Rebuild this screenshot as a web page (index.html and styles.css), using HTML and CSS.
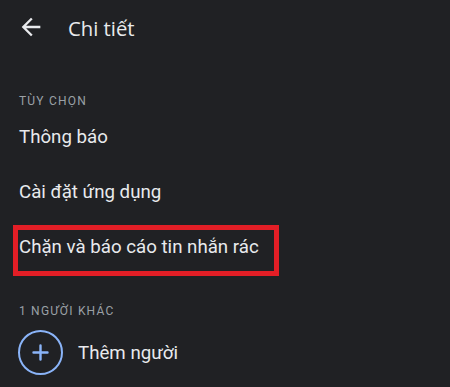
FILE: index.html
```html
<!DOCTYPE html>
<html lang="vi">
<head>
<meta charset="utf-8">
<link rel="stylesheet" href="styles.css">
</head>
<body>
<div class="screen">
  <header class="topbar">
    <svg class="back" viewBox="0 0 24 24" width="28" height="28"><path d="M20 11H7.83l5.59-5.59L12 4l-8 8 8 8 1.41-1.41L7.83 13H20v-2z" fill="#e8eaed"/></svg>
    <h1 class="title">Chi tiết</h1>
  </header>
  <div class="label first">TÙY CHỌN</div>
  <div class="row">Thông báo</div>
  <div class="row">Cài đặt ứng dụng</div>
  <div class="row marked">Chặn và báo cáo tin nhắn rác<span class="highlight"></span></div>
  <div class="label second">1 NGƯỜI KHÁC</div>
  <div class="person">
    <svg class="add" viewBox="0 0 45 45" width="45" height="45"><circle cx="22.5" cy="22.5" r="21.5" fill="none" stroke="#8ab4f8" stroke-width="2"/><path d="M22.5 15.5v14M15.5 22.5h14" stroke="#8ab4f8" stroke-width="2.4" stroke-linecap="round"/></svg>
    <span class="person-text">Thêm người</span>
  </div>
</div>
</body>
</html>
```
FILE: styles.css
```css
html, body {
  margin: 0;
  padding: 0;
  background: #202124;
}
.screen {
  width: 450px;
  height: 387px;
  overflow: hidden;
  background: #202124;
  font-family: Roboto, "Noto Sans", sans-serif;
  color: #e8eaed;
}
.topbar {
  height: 56px;
  display: flex;
  align-items: center;
  padding-left: 17px;
}
.back {
  display: block;
  margin-top: -2px;
}
.title {
  margin: 0 0 0 23px;
  font-family: "Open Sans", Roboto, sans-serif;
  font-size: 20.3px;
  font-weight: 400;
  line-height: 24px;
  color: #e8eaed;
}
.label {
  font-size: 12px;
  line-height: 16px;
  height: 16px;
  letter-spacing: 1.2px;
  color: #9aa0a6;
  padding-left: 19px;
}
.label.first {
  margin-top: 37px;
  margin-bottom: 1px;
}
.label.second {
  margin-top: 28px;
}
.row {
  height: 55px;
  line-height: 55px;
  font-size: 18.7px;
  padding-left: 19px;
  position: relative;
}
.highlight {
  position: absolute;
  left: 13px;
  top: 5px;
  width: 266px;
  height: 51px;
  border: 5px solid #e31e26;
  box-sizing: border-box;
}
.person {
  display: flex;
  align-items: center;
  padding-left: 18px;
  padding-top: 11px;
}
.add {
  display: block;
}
.person-text {
  margin-left: 15px;
  font-size: 18.7px;
}
```
